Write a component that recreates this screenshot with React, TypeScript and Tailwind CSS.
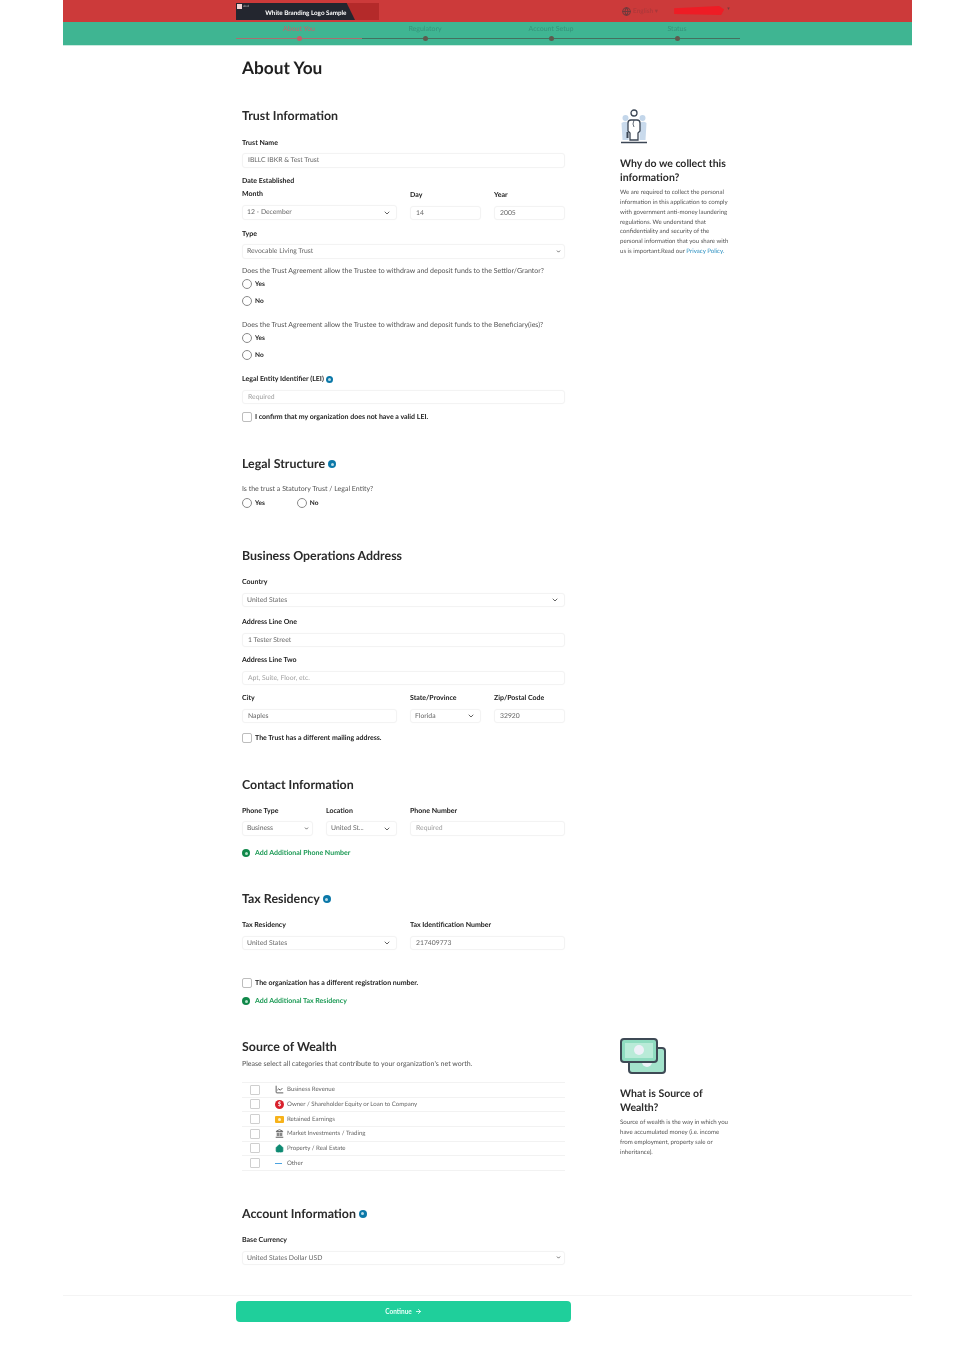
import { ArrowRight, ChevronDown, Globe, Home, Landmark, ChartLine } from "lucide-react";
import type { ReactNode } from "react";

const steps = ["About You", "Regulatory", "Account Setup", "Status"];

function Label({ children, className = "" }: { children: ReactNode; className?: string }) {
  return <div className={`h-[10px] whitespace-nowrap text-[7px] leading-[11px] font-bold text-[#222] ${className}`}>{children}</div>;
}

function Heading({ children, className = "" }: { children: ReactNode; className?: string }) {
  return <h2 className={`flex h-[14px] items-center gap-[3px] whitespace-nowrap text-[12.4px] leading-[14px] font-bold text-[#2b2b2b] ${className}`}>{children}</h2>;
}

function Info({ size = "h-[8px] w-[8px]" }: { size?: string }) {
  return (
    <span className={`inline-flex shrink-0 items-center justify-center rounded-full bg-[#0b78a8] ${size}`}>
      <span className="h-[3px] w-[3px] rounded-full bg-[#b9dcea]" />
    </span>
  );
}

function Input({ value, placeholder, className = "mt-[6px] h-[14px]" }: { value?: string; placeholder?: string; className?: string }) {
  return (
    <div className={`flex items-center rounded-[3px] border border-[#f3f3f3] px-[5px] text-[6.8px] whitespace-nowrap shadow-[0_0_1px_#f4f4f4] ${value ? "text-[#666]" : "text-[#a0a0a0]"} ${className}`}>
      {value ?? placeholder}
    </div>
  );
}

function Select({ value, small = false, className = "mt-[6px] h-[14px]" }: { value: string; small?: boolean; className?: string }) {
  return (
    <div className={`flex items-center justify-between rounded-[3px] border border-[#f3f3f3] pl-[4px] text-[6.8px] whitespace-nowrap text-[#666] shadow-[0_0_1px_#f4f4f4] ${small ? "pr-[3px]" : "pr-[5px]"} ${className}`}>
      <span>{value}</span>
      <ChevronDown className={small ? "h-[5px] w-[5px] text-[#555]" : "h-[8px] w-[8px] text-[#444]"} strokeWidth={small ? 4 : 2.5} />
    </div>
  );
}

function Radio({ label, className = "" }: { label: string; className?: string }) {
  return (
    <div className={`flex h-[10px] items-center gap-[3px] text-[6.5px] font-bold text-[#222] ${className}`}>
      <span className="h-[10px] w-[10px] rounded-full border border-[#8a8a8a]" />
      <span className="pt-px">{label}</span>
    </div>
  );
}

function Check({ label, className = "" }: { label: string; className?: string }) {
  return (
    <div className={`flex h-[11px] items-center gap-[3px] whitespace-nowrap text-[7px] font-bold text-[#222] ${className}`}>
      <span className="h-[10px] w-[10px] rounded-[2px] border border-[#bdbdbd]" />
      <span className="pt-px">{label}</span>
    </div>
  );
}

function AddLink({ label, className = "" }: { label: string; className?: string }) {
  return (
    <div className={`flex h-[10px] items-center gap-[5px] whitespace-nowrap text-[7px] font-bold text-[#1c9a55] ${className}`}>
      <span className="flex h-[8px] w-[8px] items-center justify-center rounded-full bg-[#10884a]">
        <span className="h-[3px] w-[3px] rounded-full bg-[#b5e4c9]" />
      </span>
      {label}
    </div>
  );
}

function PersonIcon() {
  return (
    <svg viewBox="0 0 30 37" className="h-[37px] w-[30px]" fill="none">
      <circle cx="5.5" cy="10" r="3" fill="#c3d6ea" />
      <circle cx="22.5" cy="10" r="3" fill="#c3d6ea" />
      <path d="M1.5 15q4-2.500 7 0v17h-6zM19.500 15q4-2.500 7 0l-1 17h-6z" fill="#c9daec" />
      <circle cx="14" cy="5" r="3" stroke="#3b4654" strokeWidth="1.3" />
      <path d="M10 32v-7l-2-2V15q0-3 3-3h6q3 0 3 3v8l-2 2v7z" fill="#fff" stroke="#3b4654" strokeWidth="1.3" />
      <path d="M14 12l-1 4 1 3" stroke="#3b4654" strokeWidth="0.8" />
      <path d="M6.500 24h2v6h-2z" fill="#3b4654" />
      <path d="M1 34.500h26" stroke="#3b4654" strokeWidth="1.5" />
    </svg>
  );
}

function MoneyIcon() {
  return (
    <svg viewBox="0 0 46 38" className="h-[38px] w-[46px]">
      <rect x="9" y="11" width="36" height="25" rx="3" fill="#a3e3cb" stroke="#3e4a55" strokeWidth="2" />
      <circle cx="27" cy="25" r="5" fill="#eef2f8" />
      <rect x="1" y="2" width="36" height="23" rx="3" fill="#8fdcc0" stroke="#3e4a55" strokeWidth="2" />
      <rect x="5" y="6" width="28" height="15" fill="#b9ebd8" />
      <circle cx="19" cy="13" r="5" fill="#eef0f8" />
    </svg>
  );
}

const wealthRows: { label: string; icon: ReactNode }[] = [
  { label: "Business Revenue", icon: <ChartLine className="h-[9px] w-[9px] text-[#555]" strokeWidth={2.5} /> },
  {
    label: "Owner / Shareholder Equity or Loan to Company",
    icon: <span className="flex h-[9px] w-[9px] items-center justify-center rounded-full bg-[#d9202c] text-[6px] font-bold text-white">$</span>,
  },
  {
    label: "Retained Earnings",
    icon: (
      <span className="flex h-[7px] w-[9px] items-center justify-center rounded-[1px] bg-[#f7b21a]">
        <span className="h-[3px] w-[3px] rounded-full bg-[#fff3cf]" />
      </span>
    ),
  },
  { label: "Market Investments / Trading", icon: <Landmark className="h-[9px] w-[9px] text-[#555]" strokeWidth={2.5} /> },
  { label: "Property / Real Estate", icon: <Home className="h-[9px] w-[9px] fill-[#0e8a72] text-[#0e8a72]" /> },
  { label: "Other", icon: <span className="h-px w-[7px] bg-[#4ba3e0]" /> },
];

function Aside({ icon, title, children, gap, iconClass }: { icon: ReactNode; title: string; children: ReactNode; gap: string; iconClass: string }) {
  return (
    <aside className="ml-[55px] w-[114px]">
      <div className={iconClass}>{icon}</div>
      <h3 className={`text-[10.5px] leading-[14px] font-bold text-[#2b2b2b] ${gap}`}>{title}</h3>
      <p className="mt-[3px] w-[112px] text-[6.1px] leading-[9.85px] text-[#555]">{children}</p>
    </aside>
  );
}

export default function App() {
  return (
    <div className="mx-[63px] h-[1345px] bg-white [font-family:Lato,sans-serif] [text-rendering:geometricPrecision] blur-[0.45px]">
      <header className="h-[22px] bg-[#cc3a3a]">
        <div className="flex h-[22px] items-start pl-[173px] pt-[3px]">
          <div className="h-[17px] w-[143px] bg-[#b42a2a]">
            <div className="flex h-[17px] w-[119px] bg-[#23262f] [clip-path:polygon(0_0,93%_0,100%_100%,0_100%)]">
              <span className="mt-[1px] ml-[1px] h-[5px] w-[5px] bg-[#f2d5d5]" />
              <span className="mt-[1px] ml-[1px] whitespace-nowrap text-[3px] leading-[5px] text-[#bbb]">abcd</span>
              <span className="ml-[16px] mt-[7px] whitespace-nowrap text-[6.3px] leading-[7px] font-bold text-white">White Branding Logo Sample</span>
            </div>
          </div>
          <div className="ml-[243px] mt-[1px] flex h-[15px] items-center gap-[1px] text-[6.5px] text-[#a8383a]">
            <Globe className="mr-[1px] h-[9px] w-[9px] text-[#6e3a3c]" strokeWidth={3} />
            English ▾
          </div>
          <div className="ml-[16px] mt-[3px] h-[9px] w-[50px] bg-[#ee1c25] [clip-path:polygon(0_25%,90%_0,100%_40%,94%_100%,0_90%)]" />
          <span className="mt-[3px] ml-[3px] text-[5px] text-[#7a3a3a]">▾</span>
        </div>
      </header>
      <nav className="h-[24px] border-b border-[#c9eadf] bg-[#3fb592] pl-[173px]">
        <div className="grid w-[504px] grid-cols-4">
          {steps.map((step, i) => (
            <div key={step} className="flex flex-col items-center">
              <span className={`mt-[3px] h-[9px] text-[7px] leading-[9px] ${i === 0 ? "text-[#c4656a]" : "text-[#35937a]"}`}>{step}</span>
              <div className="mt-[2px] flex h-[5px] w-full items-center">
                <span className={`h-px flex-1 ${i === 0 ? "bg-[#a96f6f]" : "bg-[#44705f]"}`} />
                <span className={`h-[5px] w-[5px] rounded-full ${i === 0 ? "bg-[#c95a66]" : "bg-[#5f5a4e]"}`} />
                <span className={`h-px flex-1 ${i === 0 ? "bg-[#a96f6f]" : "bg-[#44705f]"}`} />
              </div>
            </div>
          ))}
        </div>
      </nav>

      <main className="pl-[179px]">
        <h1 className="mt-[12px] h-[20px] text-[17.3px] leading-[20px] font-bold text-[#1f1f1f]">About You</h1>

        <section className="mt-[31px] flex">
          <div className="w-[323px]">
            <Heading>Trust Information</Heading>
            <Label className="mt-[15px]">Trust Name</Label>
            <Input value="IBLLC IBKR & Test Trust" className="mt-[5px] h-[15px]" />
            <Label className="mt-[8px]">Date Established</Label>
            <div className="mt-[3px] grid grid-cols-4 gap-x-[13px]">
              <div className="col-span-2">
                <Label>Month</Label>
                <Select value="12 - December" className="mt-[6px] h-[15px]" />
              </div>
              <div className="pt-px">
                <Label>Day</Label>
                <Input value="14" />
              </div>
              <div className="pt-px">
                <Label>Year</Label>
                <Input value="2005" />
              </div>
            </div>
            <Label className="mt-[9px]">Type</Label>
            <Select small value="Revocable Living Trust" className="mt-[5px] h-[15px]" />
            <p className="mt-[7px] h-[10px] whitespace-nowrap text-[7px] leading-[10px] text-[#555]">Does the Trust Agreement allow the Trustee to withdraw and deposit funds to the Settlor/Grantor?</p>
            <Radio label="Yes" className="mt-[3px]" />
            <Radio label="No" className="mt-[7px]" />
            <p className="mt-[14px] h-[10px] whitespace-nowrap text-[7px] leading-[10px] text-[#555]">Does the Trust Agreement allow the Trustee to withdraw and deposit funds to the Beneficiary(ies)?</p>
            <Radio label="Yes" className="mt-[3px]" />
            <Radio label="No" className="mt-[7px]" />
            <Label className="mt-[14px] flex items-center gap-[2px]">
              Legal Entity Identifier (LEI) <Info size="h-[7px] w-[7px]" />
            </Label>
            <Input placeholder="Required" />
            <Check label="I confirm that my organization does not have a valid LEI." className="mt-[7px]" />
          </div>
          <Aside icon={<PersonIcon />} title="Why do we collect this information?" gap="mt-[12px]" iconClass="-mt-[1px]">
            We are required to collect the personal information in this application to comply with government anti-money laundering regulations. We understand that confidentiality and security of the personal information that you share with us is important.Read our <span className="text-[#2a8fc0]">Privacy Policy.</span>
          </Aside>
        </section>

        <section className="w-[323px]">
          <Heading className="mt-[35px]">
            Legal Structure <Info />
          </Heading>
          <p className="mt-[13px] h-[10px] text-[7px] leading-[10px] text-[#555]">Is the trust a Statutory Trust / Legal Entity?</p>
          <div className="mt-[4px] flex gap-[32px]">
            <Radio label="Yes" />
            <Radio label="No" />
          </div>

          <Heading className="mt-[41px]">Business Operations Address</Heading>
          <Label className="mt-[14px]">Country</Label>
          <Select value="United States" />
          <Label className="mt-[10px]">Address Line One</Label>
          <Input value="1 Tester Street" />
          <Label className="mt-[8px]">Address Line Two</Label>
          <Input placeholder="Apt, Suite, Floor, etc." />
          <div className="mt-[8px] grid grid-cols-4 gap-x-[13px]">
            <div className="col-span-2">
              <Label>City</Label>
              <Input value="Naples" />
            </div>
            <div>
              <Label>State/Province</Label>
              <Select value="Florida" />
            </div>
            <div>
              <Label>Zip/Postal Code</Label>
              <Input value="32920" />
            </div>
          </div>
          <Check label="The Trust has a different mailing address." className="mt-[9px]" />

          <Heading className="mt-[35px]">Contact Information</Heading>
          <div className="mt-[14px] grid grid-cols-4 gap-x-[13px]">
            <div>
              <Label>Phone Type</Label>
              <Select small value="Business" className="mt-[5px] h-[15px]" />
            </div>
            <div>
              <Label>Location</Label>
              <Select value="United St..." className="mt-[5px] h-[15px]" />
            </div>
            <div className="col-span-2">
              <Label>Phone Number</Label>
              <Input placeholder="Required" className="mt-[5px] h-[15px]" />
            </div>
          </div>
          <AddLink label="Add Additional Phone Number" className="mt-[12px]" />

          <Heading className="mt-[34px]">
            Tax Residency <Info />
          </Heading>
          <div className="mt-[14px] grid grid-cols-2 gap-x-[13px]">
            <div>
              <Label>Tax Residency</Label>
              <Select value="United States" />
            </div>
            <div>
              <Label>Tax Identification Number</Label>
              <Input value="217409773" />
            </div>
          </div>
          <Check label="The organization has a different registration number." className="mt-[27px]" />
          <AddLink label="Add Additional Tax Residency" className="mt-[8px]" />
        </section>

        <section className="mt-[34px] flex">
          <div className="w-[323px]">
            <Heading>Source of Wealth</Heading>
            <p className="mt-[5px] h-[10px] text-[7px] leading-[10px] text-[#555]">Please select all categories that contribute to your organization's net worth.</p>
            <div className="mt-[13px] border-b border-[#f2f2f2]">
              {wealthRows.map((row) => (
                <div key={row.label} className="flex h-[14.67px] items-center border-t border-[#f2f2f2] pl-[8px] text-[6.1px] whitespace-nowrap text-[#666]">
                  <span className="h-[10px] w-[10px] rounded-[1px] border border-[#cfcfcf]" />
                  <span className="ml-[15px] flex w-[12px] shrink-0 items-center">{row.icon}</span>
                  {row.label}
                </div>
              ))}
            </div>
          </div>
          <Aside icon={<MoneyIcon />} title="What is Source of Wealth?" gap="mt-[12px]" iconClass="-mt-[3px]">
            Source of wealth is the way in which you have accumulated money (i.e. income from employment, property sale or inheritance).
          </Aside>
        </section>

        <section className="w-[323px]">
          <Heading className="mt-[36px]">
            Account Information <Info />
          </Heading>
          <Label className="mt-[14px]">Base Currency</Label>
          <Select small value="United States Dollar USD" />
        </section>
      </main>

      <div className="mt-[30px] border-t border-[#f4f4f4] pt-[5px] pl-[173px]">
        <button className="flex h-[21px] w-[335px] items-center justify-center gap-[3px] rounded-[4px] bg-[#1fcf9b] text-[6.5px] font-bold text-[#e8fff8]">
          Continue <ArrowRight className="h-[7px] w-[7px]" strokeWidth={3} />
        </button>
      </div>
    </div>
  );
}
